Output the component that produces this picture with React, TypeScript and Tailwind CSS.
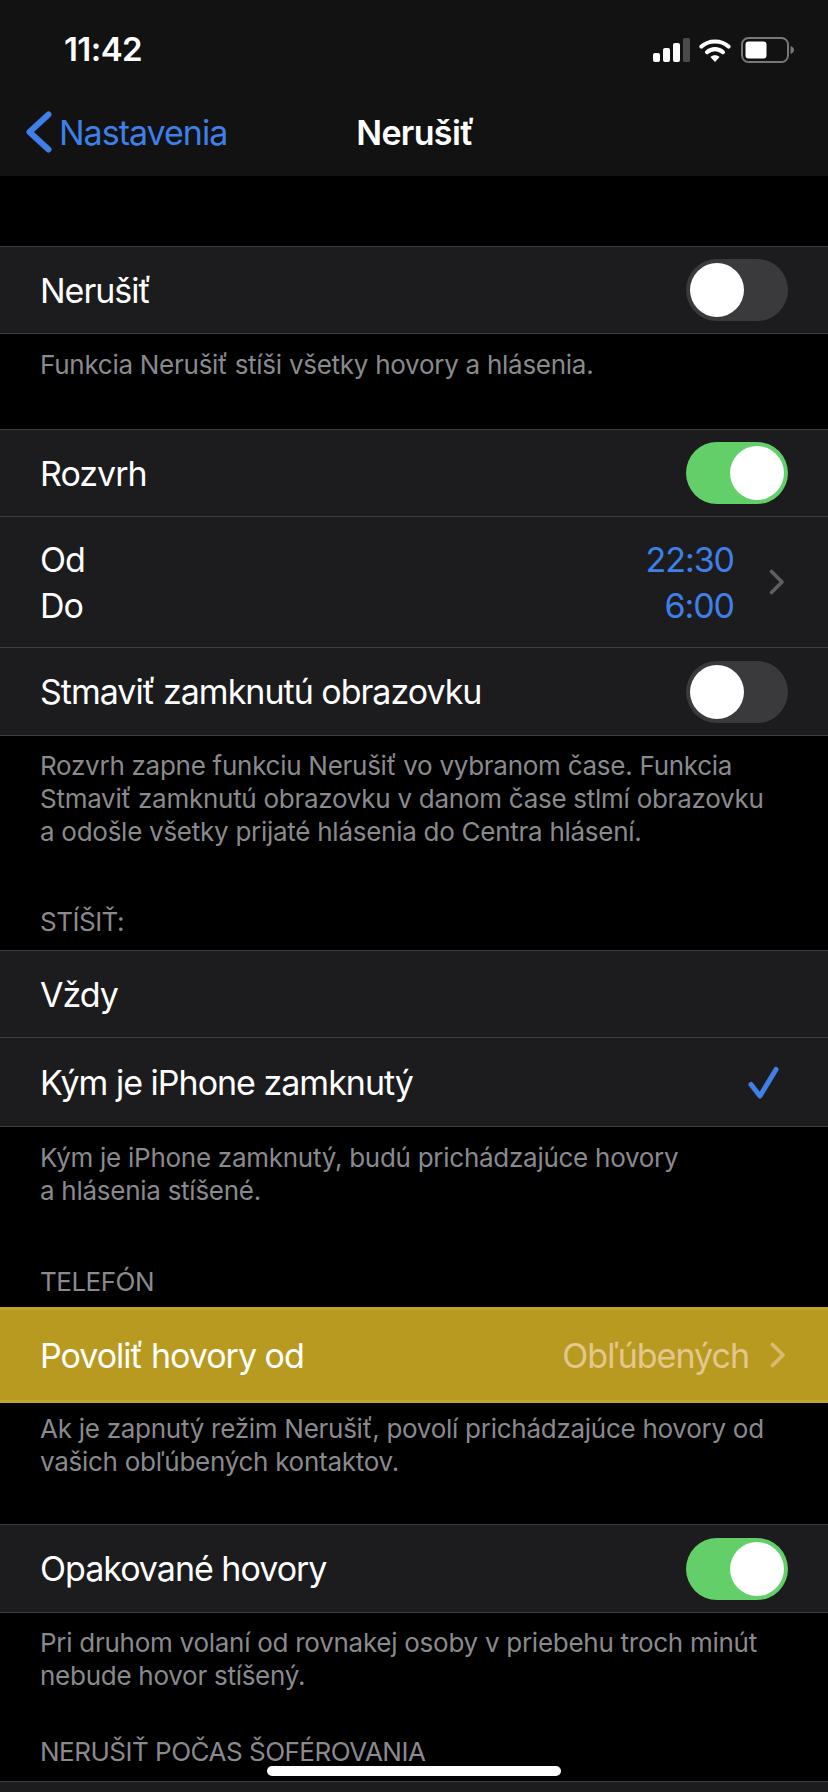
import type { ReactNode } from 'react'

function StatusIcons() {
  return (
    <div className="flex items-center">
      <svg width="38" height="24" viewBox="0 0 38 24" className="mr-2">
        <rect x="0" y="15" width="7" height="9" rx="2" fill="#fff" />
        <rect x="10" y="10" width="7" height="14" rx="2" fill="#fff" />
        <rect x="20" y="5" width="7" height="19" rx="2" fill="#fff" />
        <rect x="30" y="0" width="7" height="24" rx="1.5" fill="#4a4a4c" />
      </svg>
      <svg width="32" height="24" viewBox="0 0 32 24" className="mr-[10px]">
        <path d="M2.500 8.500C9.800 1.800 22.200 1.800 29.500 8.500" fill="none" stroke="#fff" strokeWidth="4.200" strokeLinecap="round" />
        <path d="M8 14.200c4.600-4.100 11.400-4.100 16 0" fill="none" stroke="#fff" strokeWidth="4.200" strokeLinecap="round" />
        <path d="M11.400 19 16 24l4.600-5c-2.600-2.200-6.600-2.200-9.200 0z" fill="#fff" />
      </svg>
      <svg width="53" height="26" viewBox="0 0 53 26">
        <rect x="1" y="1" width="46" height="24" rx="6.500" fill="none" stroke="#77777a" strokeWidth="2" />
        <rect x="4.500" y="4.500" width="21" height="17" rx="3" fill="#fff" />
        <path d="M49.500 9c2.200.7 3.500 2.200 3.500 4s-1.300 3.300-3.500 4z" fill="#77777a" />
      </svg>
    </div>
  )
}

function Switch({ on }: { on: boolean }) {
  return (
    <div
      className={`flex h-[62px] w-[102px] items-center rounded-full px-1 ${
        on ? 'justify-end bg-[#63cf68]' : 'justify-start bg-[#3a3a3c]'
      }`}
    >
      <div className="h-[54px] w-[54px] rounded-full bg-white" />
    </div>
  )
}

function Chevron({ color }: { color: string }) {
  return (
    <svg width="16" height="26" viewBox="0 0 16 26" fill="none">
      <path d="M2.500 2.500 13 13 2.500 23.500" stroke={color} strokeWidth="3.600" strokeLinecap="round" strokeLinejoin="round" />
    </svg>
  )
}

function Row({ label, height, children }: { label: string; height: string; children?: ReactNode }) {
  return (
    <div className={`flex items-center justify-between border-b border-[#3d3d40] bg-[#1c1c1e] pl-10 pr-10 ${height}`}>
      <span>{label}</span>
      {children}
    </div>
  )
}

function Section({ children }: { children: ReactNode }) {
  return <div className="border-t border-[#3d3d40] text-white">{children}</div>
}

function Note({ className, children }: { className: string; children: ReactNode }) {
  return <p className={`px-10 text-[26px] leading-[33px] tracking-[-0.27px] text-[#8a8a8e] ${className}`}>{children}</p>
}

function Header({ className, children }: { className: string; children: ReactNode }) {
  return <p className={`px-10 text-[26px] leading-[33px] tracking-[-0.5px] text-[#8a8a8e] ${className}`}>{children}</p>
}

export default function App() {
  return (
    <div className="relative h-[1792px] w-[828px] overflow-hidden bg-black text-[34px] tracking-[-1px] font-['Inter','Liberation_Sans',sans-serif]">
      <div className="h-[176px] bg-[#121212]">
        <div className="flex h-[88px] items-center justify-between pl-16 pr-[34px] pt-3">
          <span className="text-[33px] font-semibold tracking-[-0.6px] text-white">11:42</span>
          <StatusIcons />
        </div>
        <div className="grid h-[88px] grid-cols-[1fr_auto_1fr] items-center">
          <div className="flex items-center pl-[25px] text-[#3f80e8]">
            <svg width="28" height="42" viewBox="0 0 28 42" fill="none">
              <path d="M23.500 3.500 4.500 21l19 17.500" stroke="#3f80e8" strokeWidth="6" strokeLinecap="round" strokeLinejoin="round" />
            </svg>
            <span className="ml-[6px]">Nastavenia</span>
          </div>
          <span className="ml-[2px] font-semibold tracking-[-0.65px] text-white">Nerušiť</span>
        </div>
      </div>

      <div className="h-[70px]" />
      <Section>
        <Row label="Nerušiť" height="h-[87px]">
          <Switch on={false} />
        </Row>
      </Section>
      <Note className="mb-12 pt-[14px]">Funkcia Nerušiť stíši všetky hovory a hlásenia.</Note>

      <Section>
        <Row label="Rozvrh" height="h-[87px]">
          <Switch on />
        </Row>
        <div className="flex h-[131px] items-center border-b border-[#3d3d40] bg-[#1c1c1e] pl-10 pr-[43px]">
          <div className="flex flex-1 flex-col gap-[5px] leading-[41px]">
            <span>Od</span>
            <span>Do</span>
          </div>
          <div className="mr-[35px] flex flex-col items-end gap-[5px] leading-[41px] tracking-[-1.05px] text-[#3f80e8]">
            <span>22:30</span>
            <span>6:00</span>
          </div>
          <Chevron color="#5f5f63" />
        </div>
        <Row label="Stmaviť zamknutú obrazovku" height="h-[88px]">
          <Switch on={false} />
        </Row>
      </Section>
      <Note className="pt-[13px]">
        Rozvrh zapne funkciu Nerušiť vo vybranom čase. Funkcia
        <br />
        Stmaviť zamknutú obrazovku v danom čase stlmí obrazovku
        <br />a odošle všetky prijaté hlásenia do Centra hlásení.
      </Note>
      <Header className="mb-3 pt-[57px]">STÍŠIŤ:</Header>

      <Section>
        <Row label="Vždy" height="h-[87px]" />
        <Row label="Kým je iPhone zamknutý" height="h-[89px]">
          <svg width="36" height="36" viewBox="0 0 36 36" fill="none" className="mr-[6px]">
            <path d="M5 20.500 14 32 30 5.500" stroke="#3f80e8" strokeWidth="5" strokeLinecap="round" strokeLinejoin="round" />
          </svg>
        </Row>
      </Section>
      <Note className="pt-[14px]">
        Kým je iPhone zamknutý, budú prichádzajúce hovory
        <br />a hlásenia stíšené.
      </Note>
      <Header className="mb-[9px] pt-[58px]">TELEFÓN</Header>

      <div className="flex h-[96px] items-center justify-between border-y-[3px] border-[#c3a32d] bg-[#b99a20] pl-10 pr-[42px] text-white">
        <span>Povoliť hovory od</span>
        <div className="flex items-center gap-[21px] text-[#e3c78f]">
          <span>Obľúbených</span>
          <Chevron color="#d9bb72" />
        </div>
      </div>
      <Note className="mb-[46px] pt-[9px]">
        Ak je zapnutý režim Nerušiť, povolí prichádzajúce hovory od
        <br />
        vašich obľúbených kontaktov.
      </Note>

      <Section>
        <Row label="Opakované hovory" height="h-[88px]">
          <Switch on />
        </Row>
      </Section>
      <Note className="pt-[13px]">
        Pri druhom volaní od rovnakej osoby v priebehu troch minút
        <br />
        nebude hovor stíšený.
      </Note>
      <Header className="mb-[13px] pt-[43px]">NERUŠIŤ POČAS ŠOFÉROVANIA</Header>
      <div className="h-5 border-t border-[#3d3d40] bg-[#1c1c1e]" />

      <div className="absolute bottom-4 left-[267px] h-[10px] w-[294px] rounded-full bg-white" />
    </div>
  )
}
